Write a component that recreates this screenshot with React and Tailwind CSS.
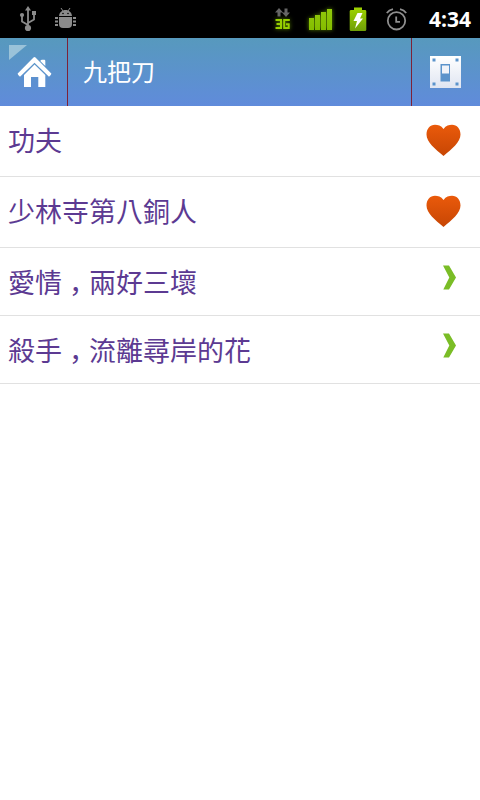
const rows = [
  { title: '功夫', liked: true },
  { title: '少林寺第八銅人', liked: true },
  { title: '愛情，兩好三壞', liked: false },
  { title: '殺手，流離尋岸的花', liked: false },
];

function Usb() {
  return (
    <svg className="ml-[19px] h-[26px] w-[18px]" viewBox="0 0 18 26" fill="none" stroke="#8b8b8b" strokeWidth="1.800">
      <path d="M9 3V20M9 19L3 15.500V9M9 17L15 13.500V8" />
      <path d="M9 0L12 4.500H6Z" fill="#8b8b8b" stroke="none" />
      <circle cx="3" cy="9" r="2.100" fill="#8b8b8b" stroke="none" />
      <path d="M13 5h4v4h-4z" fill="#8b8b8b" stroke="none" />
      <circle cx="9" cy="22" r="3.100" fill="#8b8b8b" stroke="none" />
    </svg>
  );
}

function Bug() {
  return (
    <svg className="mb-[2px] ml-[18px] h-[20px] w-[21px]" viewBox="0 0 21 20" fill="#8b8b8b">
      <path d="M4 8C4.300 4.500 7 2 10.500 2S16.700 4.500 17 8Z" />
      <path d="M6 0l2 3M15 0l-2 3" stroke="#8b8b8b" />
      <path d="M4 9h13v7q0 4-4 4H8q-4 0-4-4z" />
      <path d="M0 9h3v2H0zM0 12.500h3v2H0zM0 16h3v2H0zM18 9h3v2h-3zM18 12.500h3v2h-3zM18 16h3v2h-3z" />
      <circle cx="8" cy="5.500" r=".8" fill="#000" />
      <circle cx="13" cy="5.500" r=".8" fill="#000" />
    </svg>
  );
}

function Network() {
  return (
    <svg className="h-[22px] w-[16px] overflow-visible" viewBox="0 0 16 22">
      <path d="M4 0L8 4.500H5.500V8.500h-3V4.500H0ZM9.500 .5h3v4H15L11 9 7 4.500h2.500Z" fill="#666" />
      <path d="M.5 12H6V20H.5M1.500 16H6M14.800 12H9.200V20H13.700V16.200H11" fill="none" stroke="#96d000" strokeWidth="2" className="drop-shadow-[0_0_2px_#5b8600]" />
    </svg>
  );
}

function Signal() {
  return (
    <svg className="ml-[16px] h-[26px] w-[28px] overflow-visible drop-shadow-[0_0_2px_#5b8600]" viewBox="0 0 28 26">
      <defs>
        <linearGradient id="sig" x2="0" y2="1"><stop stopColor="#91c90b" /><stop offset="1" stopColor="#84bd00" /></linearGradient>
      </defs>
      <path d="M2 12h5v12H2zM8 9h5v15H8zM14 6h5v18h-5zM20 3h5v21h-5z" fill="url(#sig)" />
    </svg>
  );
}

function Battery() {
  return (
    <svg className="ml-[14px] h-[24px] w-[18px]" viewBox="0 0 18 24">
      <defs>
        <linearGradient id="bat" x2="0" y2="1"><stop stopColor="#9fd400" /><stop offset="1" stopColor="#6f9f08" /></linearGradient>
      </defs>
      <path d="M5 .5h8V3h3.500l.8 1v19l-.8 1h-15l-.8-1V4l.8-1H5z" fill="url(#bat)" />
      <path d="M8.500 6h5l-2.500 5.500H14L6 21.500l2-7.500H4.500z" fill="#fff" />
    </svg>
  );
}

function Alarm() {
  return (
    <svg className="ml-[19px] h-[23px] w-[21px]" viewBox="0 0 21 23" fill="none" stroke="#8f8f8f" strokeWidth="1.800">
      <circle cx="10.500" cy="12.800" r="8.700" />
      <path d="M10.200 8.500v5.300H14" />
      <path d="M.8 5Q3 2 7 1.200M20.200 5Q18 2 14 1.200" />
    </svg>
  );
}

function Home() {
  return (
    <svg className="mt-[19px] ml-[17px] h-[31px] w-[35px]" viewBox="0 0 35 31" fill="#fff">
      <path d="M16.500 .4Q17.500-.4 18.500 .4L34.300 16.500Q34.700 17.300 32 19.700L17.500 5.800 3 19.700Q.3 17.300.7 16.500Z" />
      <path d="M23.500 3.500Q24 2.800 25 2.800H27.500Q28.300 3 28.300 4V9L23.500 4.200z" />
      <path d="M17.500 7.400L28.300 18V30h-7V20h-7.300v10H7V18Z" />
    </svg>
  );
}

function Switch() {
  return (
    <svg className="mt-[17px] ml-[18px] h-[33px] w-[31px]" viewBox="0 0 31 33">
      <defs>
        <linearGradient id="plate" x2="0" y2="1"><stop stopColor="#fff" /><stop offset="1" stopColor="#dfe5f1" /></linearGradient>
      </defs>
      <path d="M0 1h31v32H0z" fill="url(#plate)" />
      <path d="M2.500 3.500h3v3h-3zM25.500 3.500h3v3h-3zM2.500 27.500h3v3h-3zM25.500 27.500h3v3h-3zM10.500 9h9.500v17.500h-9.500z" fill="#5b93cb" />
      <path d="M12 10.500h7v8h-7z" fill="#f0f3f9" />
    </svg>
  );
}

function Heart() {
  return (
    <svg className="mr-[19px] mb-[2px] h-[33px] w-[35px]" viewBox="0 0 35 33">
      <defs>
        <linearGradient id="heart" x2="0" y2="1"><stop stopColor="#ea5a0b" /><stop offset="1" stopColor="#c74604" /></linearGradient>
      </defs>
      <path d="M17.500 5C20 1.500 23 .8 26 .8C31 .8 34.500 5 34.500 10.500C34.500 18 26 25 17.500 32C9 25 .5 18 .5 10.500C.5 5 4 .8 9 .8C12 .8 15 1.500 17.500 5Z" fill="url(#heart)" />
    </svg>
  );
}

function Chevron() {
  return (
    <svg className="mr-[23px] mb-[8px] h-[25px] w-[14px]" viewBox="0 0 14 25">
      <path d="M0 .5h6l7 12L6 24.500H.3l6-12z" fill="#7abd26" />
    </svg>
  );
}

// The fullwidth comma is set low and centred in its cell.
function Title({ text }) {
  const [head, tail] = text.split('，');
  if (tail === undefined) return text;
  return (
    <>
      {head}
      <span lang="zh-CN" className="inline-block w-[27px] pl-[7px] font-['Noto_Sans_CJK_SC',sans-serif] [font-feature-settings:'halt']">，</span>
      {tail}
    </>
  );
}

export default function App() {
  return (
    <div className="flex h-[800px] w-[480px] flex-col overflow-hidden bg-white font-['Noto_Sans_CJK_TC',sans-serif]">
      <div className="flex h-[38px] shrink-0 items-center bg-black">
        <Usb />
        <Bug />
        <div className="ml-auto flex items-center">
          <Network />
          <Signal />
          <Battery />
          <Alarm />
          <span className="ml-[22px] w-[51px] font-['Open_Sans',sans-serif] text-[21px] leading-none font-bold text-white">4:34</span>
        </div>
      </div>
      <header className="flex h-[68px] shrink-0 bg-linear-to-b from-[#5799bd] to-[#608bdb] text-white">
        <div className="relative w-[68px] border-r border-[#7d2238]">
          <svg className="absolute top-[7px] left-[9px] h-[15px] w-[18px]" viewBox="0 0 18 15"><path d="M0 0h18L0 15z" fill="#9bc3d9" /></svg>
          <Home />
        </div>
        <h1 className="flex-1 pl-[15px] text-[24px] leading-[66px] font-normal">九把刀</h1>
        <div className="w-[69px] border-l border-[#7d2238]"><Switch /></div>
      </header>
      <ul>
        {rows.map((row) => (
          <li key={row.title} className={`flex items-center justify-between border-b border-[#e1e1e1] ${row.liked ? 'h-[71px]' : 'h-[68px]'}`}>
            <span className={`pl-[8px] text-[27px] leading-none text-[#5c3a92] ${row.liked ? 'pb-[4px]' : 'pb-[1px]'}`}>
              <Title text={row.title} />
            </span>
            {row.liked ? <Heart /> : <Chevron />}
          </li>
        ))}
      </ul>
    </div>
  );
}
